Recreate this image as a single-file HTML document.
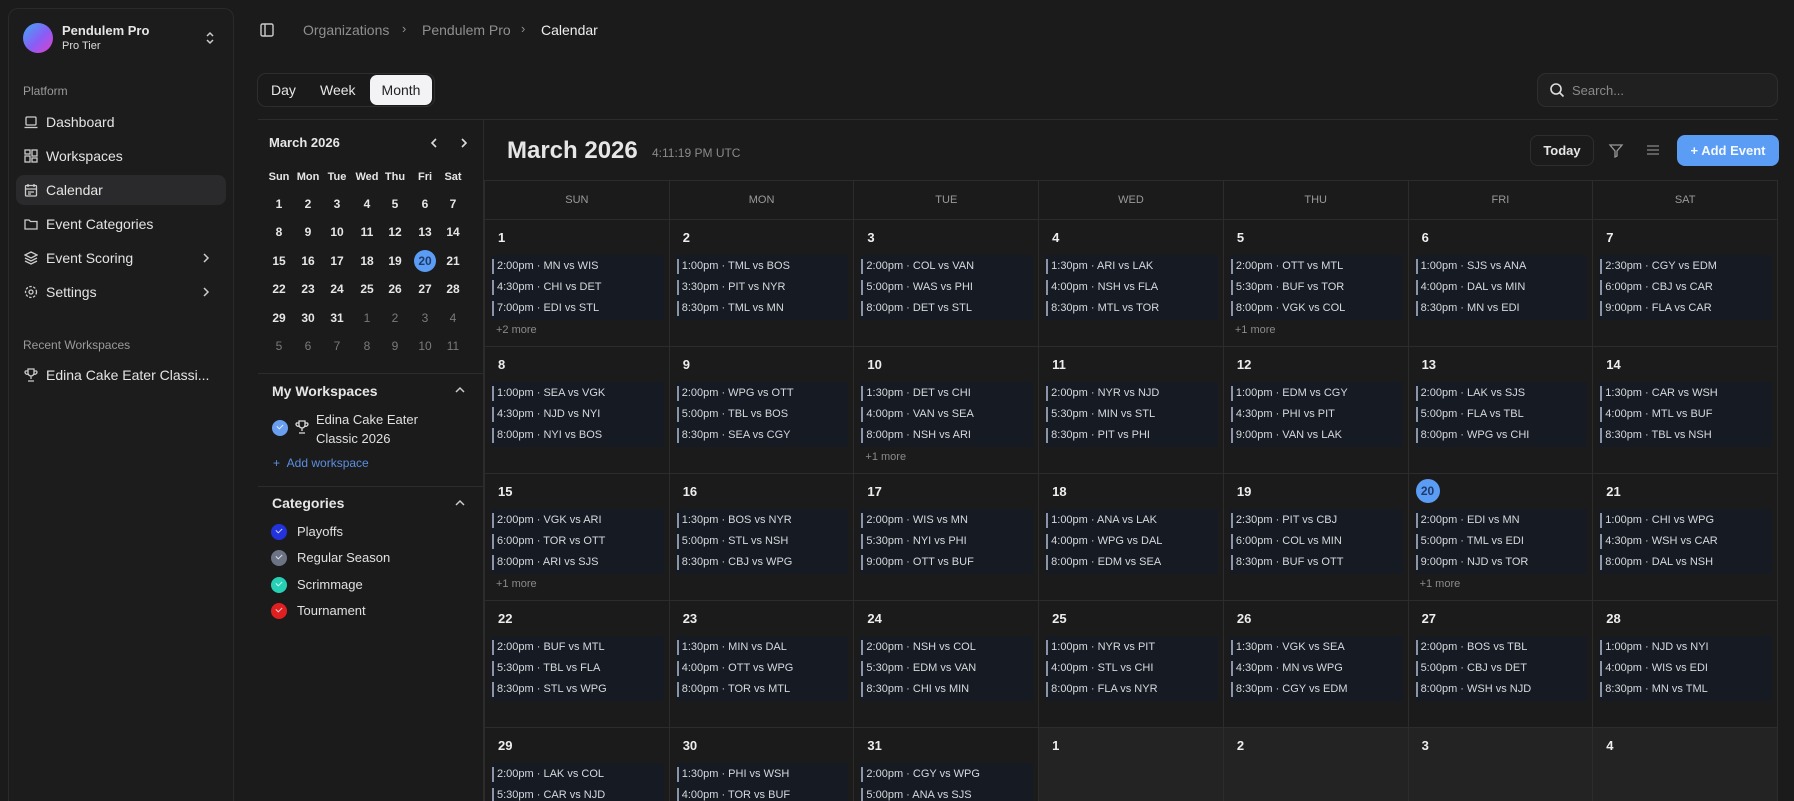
<!DOCTYPE html>
<html><head><meta charset="utf-8"><style>
*{box-sizing:border-box;margin:0;padding:0}
html,body{width:1794px;height:801px;overflow:hidden}
body{background:#1b1b1b;font-family:"Liberation Sans",sans-serif;color:#e6e6e6}
#wrap{position:relative;width:1794px;height:801px;overflow:hidden}
.abs{position:absolute}
#side{left:8px;top:8px;width:226px;height:793px;border:1px solid #2a2a2a;border-bottom:none;border-radius:10px 10px 0 0;background:#1c1c1c}
.nav{position:absolute;left:16px;width:210px;height:30px;font-size:14px;color:#e4e4e4;display:flex;align-items:center;padding-left:30px}
.nav svg{position:absolute;left:8px;top:8px}
.lbl{font-size:12px;color:#9a9a9a;position:absolute;left:23px}
.grid{position:absolute;left:484px;top:180px;width:1294px;height:621px;overflow:hidden;display:grid;grid-template-columns:repeat(7,1fr);grid-template-rows:39px 127px 127px 127px 127px 74px;border-left:1px solid #2c2c2c;border-top:1px solid #2c2c2c}
.h{border-right:1px solid #2c2c2c;border-bottom:1px solid #2c2c2c;font-size:11px;color:#9a9a9a;text-align:center;line-height:38px}
.c{position:relative;border-right:1px solid #2c2c2c;border-bottom:1px solid #2c2c2c;overflow:hidden}
.l{border-bottom:none}
.c b{position:absolute;left:13px;top:10px;font-size:13px;color:#eee}
.ev{position:absolute;left:6px;right:5px;top:35px;background:#161b23;padding:1px 0}
.ev p{height:21px;line-height:21px;font-size:11px;color:#d6d9de;padding-left:6px;position:relative;white-space:nowrap}
.ev p:before{content:"";position:absolute;left:1px;top:3px;bottom:3px;width:2px;background:#8c95a8}
.c i{position:absolute;left:11px;top:104px;font-style:normal;font-size:11px;color:#8a8a8a}
.nx{background:#232323}
.mc{position:absolute;font-size:11px;font-weight:bold;width:28px;text-align:center}
.cat{position:absolute;left:271px;font-size:13px;color:#e0e0e0;padding-left:26px;height:18px;line-height:18px}
.cat span{position:absolute;left:0;top:1px;width:16px;height:16px;border-radius:50%}
.cat span:after,.ck:after{content:"";position:absolute;left:5px;top:4px;width:5px;height:3px;border-left:1.5px solid rgba(255,255,255,.8);border-bottom:1.5px solid rgba(255,255,255,.8);transform:rotate(-45deg)}
</style></head><body><div id="wrap">
<div id="side" class="abs"></div>
<div class="abs" style="left:23px;top:23px;width:30px;height:30px;border-radius:50%;background:linear-gradient(135deg,#3fa9f5,#8b5cf6 55%,#e040c8)"></div>
<div class="abs" style="left:62px;top:23px;font-size:13px;font-weight:bold">Pendulem Pro</div>
<div class="abs" style="left:62px;top:40px;font-size:11px;color:#ddd">Pro Tier</div>
<svg class="abs" style="left:204px;top:30px" width="12" height="16" viewBox="0 0 12 16"><path d="M3 6l3-3 3 3M3 10l3 3 3-3" stroke="#ccc" stroke-width="1.5" fill="none"/></svg>
<div class="lbl" style="top:84px">Platform</div>
<div class="nav" style="top:107px"><svg width="14" height="14" viewBox="0 0 14 14" fill="none" stroke="#ccc" stroke-width="1.3"><rect x="2" y="2" width="10" height="8" rx="1"/><path d="M0.5 12.5h13"/></svg>Dashboard</div>
<div class="nav" style="top:141px"><svg width="14" height="14" viewBox="0 0 14 14" fill="none" stroke="#ccc" stroke-width="1.3"><rect x="1" y="1" width="5" height="4"/><rect x="8" y="1" width="5" height="6"/><rect x="1" y="7" width="5" height="6"/><rect x="8" y="9" width="5" height="4"/></svg>Workspaces</div>
<div class="nav" style="top:175px;background:#2a2a2c;border-radius:8px"><svg width="14" height="14" viewBox="0 0 14 14" fill="none" stroke="#ccc" stroke-width="1.3"><rect x="1.5" y="2.5" width="11" height="10.5" rx="1"/><path d="M4 1v3M10 1v3M1.5 6h11M4 9h6M4 11h3"/></svg>Calendar</div>
<div class="nav" style="top:209px"><svg width="14" height="14" viewBox="0 0 14 14" fill="none" stroke="#ccc" stroke-width="1.3"><path d="M1 3h4l1.5 1.5H13V12H1z"/></svg>Event Categories</div>
<div class="nav" style="top:243px"><svg width="14" height="14" viewBox="0 0 14 14" fill="none" stroke="#ccc" stroke-width="1.3"><path d="M7 1l6 3-6 3-6-3zM1 7l6 3 6-3M1 10l6 3 6-3"/></svg>Event Scoring<svg style="left:186px;top:10px" width="8" height="10" viewBox="0 0 8 10"><path d="M2 1l4 4-4 4" stroke="#ccc" stroke-width="1.5" fill="none"/></svg></div>
<div class="nav" style="top:277px"><svg width="14" height="14" viewBox="0 0 14 14" fill="none" stroke="#ccc" stroke-width="1.3"><circle cx="7" cy="7" r="2"/><circle cx="7" cy="7" r="5.5" stroke-dasharray="2.5 1.5"/></svg>Settings<svg style="left:186px;top:10px" width="8" height="10" viewBox="0 0 8 10"><path d="M2 1l4 4-4 4" stroke="#ccc" stroke-width="1.5" fill="none"/></svg></div>
<div class="lbl" style="top:338px">Recent Workspaces</div>
<div class="nav" style="top:360px"><svg width="14" height="14" viewBox="0 0 14 14" fill="none" stroke="#ccc" stroke-width="1.3"><path d="M4 1h6v4a3 3 0 0 1-6 0zM7 8v3M4 13h6M4 3H1.5a2 2 0 0 0 2.5 3M10 3h2.5a2 2 0 0 1-2.5 3"/></svg>Edina Cake Eater Classi...</div>

<svg class="abs" style="left:259px;top:22px" width="16" height="16" viewBox="0 0 16 16" fill="none" stroke="#ccc" stroke-width="1.4"><rect x="2" y="2" width="12" height="12" rx="1.5"/><path d="M6 2v12"/></svg>
<div class="abs" style="left:303px;top:22px;font-size:14px;color:#8f8f8f">Organizations</div>
<div class="abs" style="left:402px;top:21px;font-size:13px;color:#8f8f8f">›</div>
<div class="abs" style="left:422px;top:22px;font-size:14px;color:#8f8f8f">Pendulem Pro</div>
<div class="abs" style="left:521px;top:21px;font-size:13px;color:#8f8f8f">›</div>
<div class="abs" style="left:541px;top:22px;font-size:14px;color:#eee">Calendar</div>

<div class="abs" style="left:257px;top:73px;width:178px;height:34px;border:1px solid #2e2e2e;border-radius:9px;background:#1a1a1a"></div>
<div class="abs" style="left:271px;top:82px;font-size:14px;color:#e6e6e6">Day</div>
<div class="abs" style="left:320px;top:82px;font-size:14px;color:#e6e6e6">Week</div>
<div class="abs" style="left:370px;top:75px;width:62px;height:30px;border-radius:7px;background:#f3f3f5;color:#222;font-size:14px;text-align:center;line-height:30px">Month</div>

<div class="abs" style="left:1537px;top:73px;width:241px;height:34px;border:1px solid #2e2e2e;border-radius:9px;background:#202020"></div>
<svg class="abs" style="left:1549px;top:82px" width="16" height="16" viewBox="0 0 16 16" fill="none" stroke="#ddd" stroke-width="1.6"><circle cx="7" cy="7" r="5"/><path d="M11 11l3.5 3.5"/></svg>
<div class="abs" style="left:1572px;top:83px;font-size:13px;color:#8a8a8a">Search...</div>
<div class="abs" style="left:258px;top:119px;width:1520px;height:1px;background:#2c2c2c"></div>
<div class="abs" style="left:483px;top:119px;width:1px;height:682px;background:#2c2c2c"></div>

<div class="abs" style="left:269px;top:135px;font-size:13px;font-weight:bold">March 2026</div>
<svg class="abs" style="left:429px;top:137px" width="40" height="12" viewBox="0 0 40 12" fill="none" stroke="#ddd" stroke-width="1.6"><path d="M7 2l-4 4 4 4M33 2l4 4-4 4"/></svg>
<div class="mc" style="left:265px;top:171px">Sun</div><div class="mc" style="left:294px;top:171px">Mon</div><div class="mc" style="left:323px;top:171px">Tue</div><div class="mc" style="left:353px;top:171px">Wed</div><div class="mc" style="left:381px;top:171px">Thu</div><div class="mc" style="left:411px;top:171px">Fri</div><div class="mc" style="left:439px;top:171px">Sat</div>
<div style="font-size:12px;font-weight:bold">
<div class="mc" style="left:265px;top:197px;font-size:12px">1</div><div class="mc" style="left:294px;top:197px;font-size:12px">2</div><div class="mc" style="left:323px;top:197px;font-size:12px">3</div><div class="mc" style="left:353px;top:197px;font-size:12px">4</div><div class="mc" style="left:381px;top:197px;font-size:12px">5</div><div class="mc" style="left:411px;top:197px;font-size:12px">6</div><div class="mc" style="left:439px;top:197px;font-size:12px">7</div>
<div class="mc" style="left:265px;top:225px;font-size:12px">8</div><div class="mc" style="left:294px;top:225px;font-size:12px">9</div><div class="mc" style="left:323px;top:225px;font-size:12px">10</div><div class="mc" style="left:353px;top:225px;font-size:12px">11</div><div class="mc" style="left:381px;top:225px;font-size:12px">12</div><div class="mc" style="left:411px;top:225px;font-size:12px">13</div><div class="mc" style="left:439px;top:225px;font-size:12px">14</div>
<div class="mc" style="left:265px;top:254px;font-size:12px">15</div><div class="mc" style="left:294px;top:254px;font-size:12px">16</div><div class="mc" style="left:323px;top:254px;font-size:12px">17</div><div class="mc" style="left:353px;top:254px;font-size:12px">18</div><div class="mc" style="left:381px;top:254px;font-size:12px">19</div><div class="mc" style="left:414px;top:250px;font-size:12px;width:22px;height:22px;line-height:22px;border-radius:50%;background:#5b9cf5;color:#1e3a6a">20</div><div class="mc" style="left:439px;top:254px;font-size:12px">21</div>
<div class="mc" style="left:265px;top:282px;font-size:12px">22</div><div class="mc" style="left:294px;top:282px;font-size:12px">23</div><div class="mc" style="left:323px;top:282px;font-size:12px">24</div><div class="mc" style="left:353px;top:282px;font-size:12px">25</div><div class="mc" style="left:381px;top:282px;font-size:12px">26</div><div class="mc" style="left:411px;top:282px;font-size:12px">27</div><div class="mc" style="left:439px;top:282px;font-size:12px">28</div>
<div class="mc" style="left:265px;top:311px;font-size:12px">29</div><div class="mc" style="left:294px;top:311px;font-size:12px">30</div><div class="mc" style="left:323px;top:311px;font-size:12px">31</div>
<div style="color:#7a7a7a;font-weight:normal">
<div class="mc" style="left:353px;top:311px;font-size:12px;font-weight:normal">1</div><div class="mc" style="left:381px;top:311px;font-size:12px;font-weight:normal">2</div><div class="mc" style="left:411px;top:311px;font-size:12px;font-weight:normal">3</div><div class="mc" style="left:439px;top:311px;font-size:12px;font-weight:normal">4</div>
<div class="mc" style="left:265px;top:339px;font-size:12px;font-weight:normal">5</div><div class="mc" style="left:294px;top:339px;font-size:12px;font-weight:normal">6</div><div class="mc" style="left:323px;top:339px;font-size:12px;font-weight:normal">7</div><div class="mc" style="left:353px;top:339px;font-size:12px;font-weight:normal">8</div><div class="mc" style="left:381px;top:339px;font-size:12px;font-weight:normal">9</div><div class="mc" style="left:411px;top:339px;font-size:12px;font-weight:normal">10</div><div class="mc" style="left:439px;top:339px;font-size:12px;font-weight:normal">11</div>
</div></div>

<div class="abs" style="left:258px;top:373px;width:225px;height:1px;background:#2c2c2c"></div>
<div class="abs" style="left:272px;top:383px;font-size:14px;font-weight:bold">My Workspaces</div>
<svg class="abs" style="left:455px;top:386px" width="10" height="8" viewBox="0 0 10 8"><path d="M1 6l4-4 4 4" stroke="#ccc" stroke-width="1.5" fill="none"/></svg>
<div class="abs ck" style="left:272px;top:420px;width:16px;height:16px;border-radius:50%;background:#6a9ff0"></div>
<svg class="abs" style="left:295px;top:420px" width="14" height="14" viewBox="0 0 14 14" fill="none" stroke="#ddd" stroke-width="1.3"><path d="M4 1h6v4a3 3 0 0 1-6 0zM7 8v3M4 13h6M4 3H1.5a2 2 0 0 0 2.5 3M10 3h2.5a2 2 0 0 1-2.5 3"/></svg>
<div class="abs" style="left:316px;top:410px;font-size:13px;line-height:19px;color:#e0e0e0">Edina Cake Eater<br>Classic 2026</div>
<div class="abs" style="left:273px;top:456px;font-size:12px;color:#5b8fe0">+&nbsp;&nbsp;Add workspace</div>
<div class="abs" style="left:258px;top:486px;width:225px;height:1px;background:#2c2c2c"></div>
<div class="abs" style="left:272px;top:495px;font-size:14px;font-weight:bold">Categories</div>
<svg class="abs" style="left:455px;top:499px" width="10" height="8" viewBox="0 0 10 8"><path d="M1 6l4-4 4 4" stroke="#ccc" stroke-width="1.5" fill="none"/></svg>
<div class="cat" style="top:523px"><span style="background:#2233dd"></span>Playoffs</div>
<div class="cat" style="top:549px"><span style="background:#6b7385"></span>Regular Season</div>
<div class="cat" style="top:576px"><span style="background:#25d0b5"></span>Scrimmage</div>
<div class="cat" style="top:602px"><span style="background:#e02020"></span>Tournament</div>

<div class="abs" style="left:507px;top:137px;font-size:24px;font-weight:bold">March 2026</div>
<div class="abs" style="left:652px;top:146px;font-size:12px;color:#8a8a8a">4:11:19 PM UTC</div>
<div class="abs" style="left:1530px;top:135px;width:64px;height:31px;border:1px solid #2e2e2e;border-radius:8px;font-size:13px;font-weight:bold;text-align:center;line-height:29px">Today</div>
<svg class="abs" style="left:1608px;top:143px" width="16" height="16" viewBox="0 0 16 16" fill="none" stroke="#999" stroke-width="1.3"><path d="M2 2h12l-5 6v5l-2 1V8z"/></svg>
<svg class="abs" style="left:1646px;top:143px" width="14" height="14" viewBox="0 0 14 14" stroke="#888" stroke-width="1.3"><path d="M1 3h12M1 7h12M1 11h12"/></svg>
<div class="abs" style="left:1677px;top:135px;width:102px;height:31px;border-radius:8px;background:#5b9cf5;font-size:13px;font-weight:bold;text-align:center;line-height:31px;color:#f4f8ff">+ Add Event</div>

<div class="grid">
<div class="h">SUN</div><div class="h">MON</div><div class="h">TUE</div><div class="h">WED</div><div class="h">THU</div><div class="h">FRI</div><div class="h">SAT</div>
<div class="c"><b>1</b><div class="ev"><p>2:00pm · MN vs WIS</p><p>4:30pm · CHI vs DET</p><p>7:00pm · EDI vs STL</p></div><i>+2 more</i></div>
<div class="c"><b>2</b><div class="ev"><p>1:00pm · TML vs BOS</p><p>3:30pm · PIT vs NYR</p><p>8:30pm · TML vs MN</p></div></div>
<div class="c"><b>3</b><div class="ev"><p>2:00pm · COL vs VAN</p><p>5:00pm · WAS vs PHI</p><p>8:00pm · DET vs STL</p></div></div>
<div class="c"><b>4</b><div class="ev"><p>1:30pm · ARI vs LAK</p><p>4:00pm · NSH vs FLA</p><p>8:30pm · MTL vs TOR</p></div></div>
<div class="c"><b>5</b><div class="ev"><p>2:00pm · OTT vs MTL</p><p>5:30pm · BUF vs TOR</p><p>8:00pm · VGK vs COL</p></div><i>+1 more</i></div>
<div class="c"><b>6</b><div class="ev"><p>1:00pm · SJS vs ANA</p><p>4:00pm · DAL vs MIN</p><p>8:30pm · MN vs EDI</p></div></div>
<div class="c"><b>7</b><div class="ev"><p>2:30pm · CGY vs EDM</p><p>6:00pm · CBJ vs CAR</p><p>9:00pm · FLA vs CAR</p></div></div>
<div class="c"><b>8</b><div class="ev"><p>1:00pm · SEA vs VGK</p><p>4:30pm · NJD vs NYI</p><p>8:00pm · NYI vs BOS</p></div></div>
<div class="c"><b>9</b><div class="ev"><p>2:00pm · WPG vs OTT</p><p>5:00pm · TBL vs BOS</p><p>8:30pm · SEA vs CGY</p></div></div>
<div class="c"><b>10</b><div class="ev"><p>1:30pm · DET vs CHI</p><p>4:00pm · VAN vs SEA</p><p>8:00pm · NSH vs ARI</p></div><i>+1 more</i></div>
<div class="c"><b>11</b><div class="ev"><p>2:00pm · NYR vs NJD</p><p>5:30pm · MIN vs STL</p><p>8:30pm · PIT vs PHI</p></div></div>
<div class="c"><b>12</b><div class="ev"><p>1:00pm · EDM vs CGY</p><p>4:30pm · PHI vs PIT</p><p>9:00pm · VAN vs LAK</p></div></div>
<div class="c"><b>13</b><div class="ev"><p>2:00pm · LAK vs SJS</p><p>5:00pm · FLA vs TBL</p><p>8:00pm · WPG vs CHI</p></div></div>
<div class="c"><b>14</b><div class="ev"><p>1:30pm · CAR vs WSH</p><p>4:00pm · MTL vs BUF</p><p>8:30pm · TBL vs NSH</p></div></div>
<div class="c"><b>15</b><div class="ev"><p>2:00pm · VGK vs ARI</p><p>6:00pm · TOR vs OTT</p><p>8:00pm · ARI vs SJS</p></div><i>+1 more</i></div>
<div class="c"><b>16</b><div class="ev"><p>1:30pm · BOS vs NYR</p><p>5:00pm · STL vs NSH</p><p>8:30pm · CBJ vs WPG</p></div></div>
<div class="c"><b>17</b><div class="ev"><p>2:00pm · WIS vs MN</p><p>5:30pm · NYI vs PHI</p><p>9:00pm · OTT vs BUF</p></div></div>
<div class="c"><b>18</b><div class="ev"><p>1:00pm · ANA vs LAK</p><p>4:00pm · WPG vs DAL</p><p>8:00pm · EDM vs SEA</p></div></div>
<div class="c"><b>19</b><div class="ev"><p>2:30pm · PIT vs CBJ</p><p>6:00pm · COL vs MIN</p><p>8:30pm · BUF vs OTT</p></div></div>
<div class="c"><b style="left:7px;top:5px;width:24px;height:24px;border-radius:50%;background:#5b9cf5;color:#1e3a6a;font-size:12px;text-align:center;line-height:24px">20</b><div class="ev"><p>2:00pm · EDI vs MN</p><p>5:00pm · TML vs EDI</p><p>9:00pm · NJD vs TOR</p></div><i>+1 more</i></div>
<div class="c"><b>21</b><div class="ev"><p>1:00pm · CHI vs WPG</p><p>4:30pm · WSH vs CAR</p><p>8:00pm · DAL vs NSH</p></div></div>
<div class="c"><b>22</b><div class="ev"><p>2:00pm · BUF vs MTL</p><p>5:30pm · TBL vs FLA</p><p>8:30pm · STL vs WPG</p></div></div>
<div class="c"><b>23</b><div class="ev"><p>1:30pm · MIN vs DAL</p><p>4:00pm · OTT vs WPG</p><p>8:00pm · TOR vs MTL</p></div></div>
<div class="c"><b>24</b><div class="ev"><p>2:00pm · NSH vs COL</p><p>5:30pm · EDM vs VAN</p><p>8:30pm · CHI vs MIN</p></div></div>
<div class="c"><b>25</b><div class="ev"><p>1:00pm · NYR vs PIT</p><p>4:00pm · STL vs CHI</p><p>8:00pm · FLA vs NYR</p></div></div>
<div class="c"><b>26</b><div class="ev"><p>1:30pm · VGK vs SEA</p><p>4:30pm · MN vs WPG</p><p>8:30pm · CGY vs EDM</p></div></div>
<div class="c"><b>27</b><div class="ev"><p>2:00pm · BOS vs TBL</p><p>5:00pm · CBJ vs DET</p><p>8:00pm · WSH vs NJD</p></div></div>
<div class="c"><b>28</b><div class="ev"><p>1:00pm · NJD vs NYI</p><p>4:00pm · WIS vs EDI</p><p>8:30pm · MN vs TML</p></div></div>
<div class="c l"><b>29</b><div class="ev"><p>2:00pm · LAK vs COL</p><p>5:30pm · CAR vs NJD</p></div></div>
<div class="c l"><b>30</b><div class="ev"><p>1:30pm · PHI vs WSH</p><p>4:00pm · TOR vs BUF</p></div></div>
<div class="c l"><b>31</b><div class="ev"><p>2:00pm · CGY vs WPG</p><p>5:00pm · ANA vs SJS</p></div></div>
<div class="c l nx"><b>1</b></div>
<div class="c l nx"><b>2</b></div>
<div class="c l nx"><b>3</b></div>
<div class="c l nx"><b>4</b></div>
</div>
</div></body></html>
